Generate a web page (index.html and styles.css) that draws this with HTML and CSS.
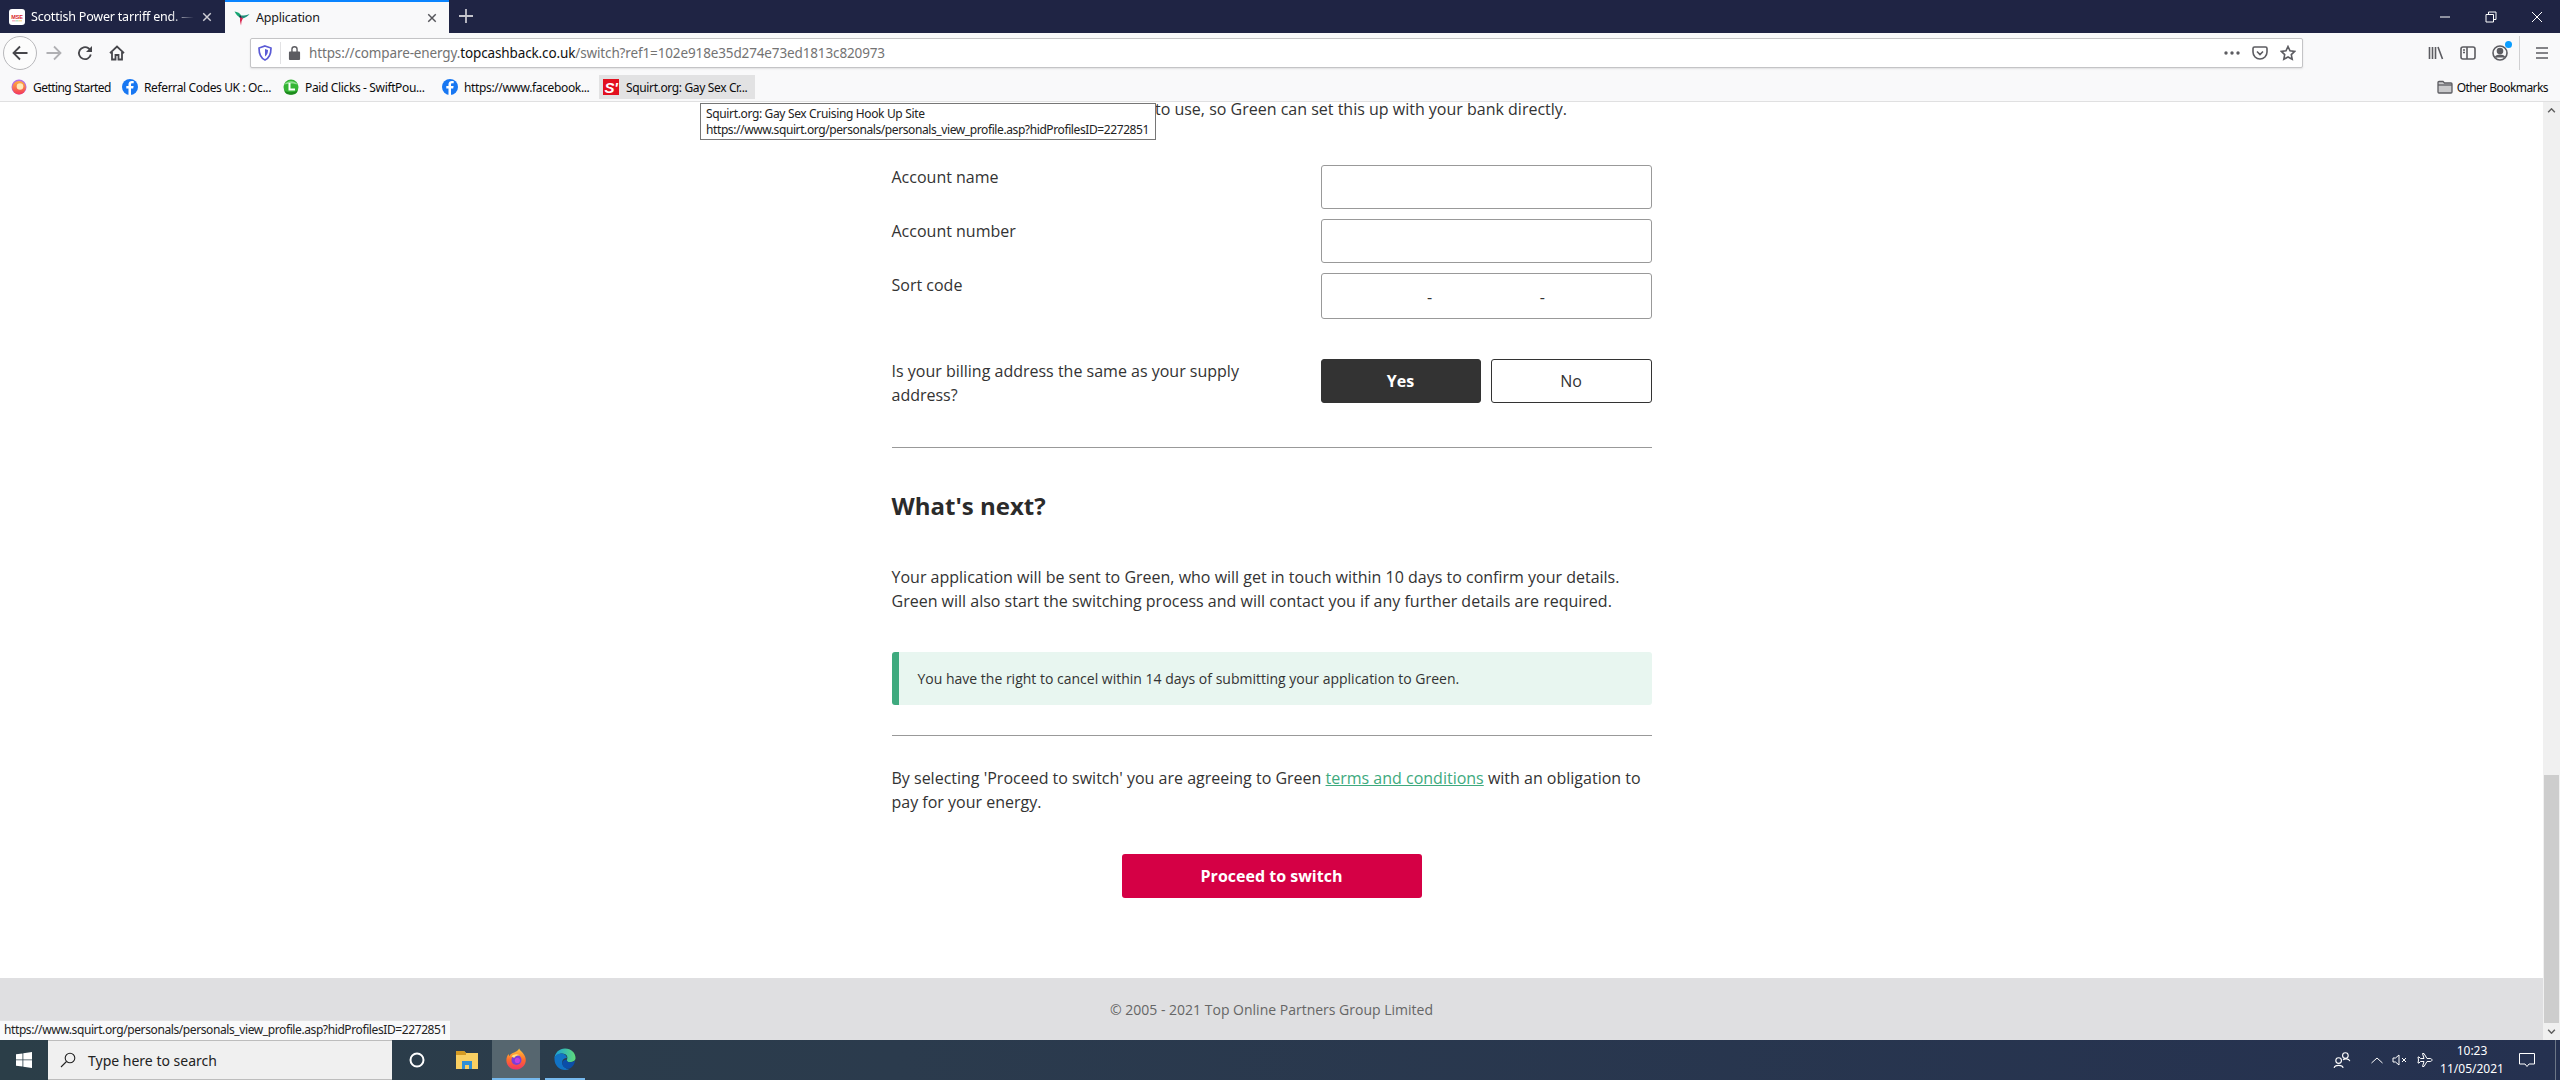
FILE: index.html
```html
<!DOCTYPE html>
<html lang="en">
<head>
<meta charset="utf-8">
<title>Application</title>
<link rel="stylesheet" href="styles.css">
</head>
<body>
<div class="app">
  <header class="tabbar">
    <div class="tab">
      <svg class="fav" viewBox="0 0 16 16"><rect width="16" height="16" rx="3" fill="#fff"/><text x="8" y="9.500" class="mse">MSE</text><rect x="3" y="11" width="3.500" height="1.500" fill="#f6b6c6"/><rect x="6.500" y="11" width="3" height="1.500" fill="#b9e3c6"/><rect x="9.500" y="11" width="3.500" height="1.500" fill="#f8d9a0"/></svg>
      <span class="tab-title fade">Scottish Power tarriff end. — MSE</span>
      <svg class="tab-x light" viewBox="0 0 12 12"><path d="M1.500 1.500l9 9M10.500 1.500l-9 9"/></svg>
    </div>
    <div class="tab active">
      <svg class="fav" viewBox="0 0 16 16"><path d="M.5 1.500c3 .2 5.500 1.700 6.800 4.200L6 7.500C3.800 6.500 2 4.200.5 1.500z" fill="#17a673"/><path d="M7 5.500c2.500.2 5.500-.3 8.500-1.500-1.500 2-4 3.500-7 4.500z" fill="#1d8f7a"/><path d="M6 7l3 1-1.500 3.500-.5 4L6 11z" fill="#d9264f"/><path d="M5.500 5.500l2 .5.300 2-2.300-.5z" fill="#1f2444"/></svg>
      <span class="tab-title">Application</span>
      <svg class="tab-x" viewBox="0 0 12 12"><path d="M1.500 1.500l9 9M10.500 1.500l-9 9"/></svg>
    </div>
    <svg class="newtab" viewBox="0 0 14 14"><path d="M7 0v14M0 7h14"/></svg>
    <div class="winctl">
      <svg viewBox="0 0 12 12"><path d="M1 6h10"/></svg>
      <svg viewBox="0 0 12 12"><path d="M1 3.500h7.500V11H1zM3.500 3.500V1H11v7.500H8.500"/></svg>
      <svg viewBox="0 0 12 12"><path d="M1 1l10 10M11 1L1 11"/></svg>
    </div>
  </header>

  <nav class="toolbar">
    <div class="back"><svg class="ic strong" viewBox="0 0 16 16"><path d="M15.500 8H1.500M8 1.500L1.500 8 8 14.500"/></svg></div>
    <svg class="ic fwd" viewBox="0 0 16 16"><path d="M.5 8h14M8 1.500L14.500 8 8 14.500"/></svg>
    <svg class="ic reload strong" viewBox="0 0 16 16"><path d="M13.800 9.500A6 6 0 1 1 11.500 3.300L13.500 5"/><path class="solid" d="M15 1v6H9z"/></svg>
    <svg class="ic home strong" viewBox="0 0 16 16"><path d="M1 8.200L8 1.500l7 6.700M3 7v7.500h3.500V10h3v4.500H13V7"/></svg>
    <div class="urlbar">
      <svg class="shield" viewBox="0 0 16 16"><path d="M8 1l6 2c0 6-1.500 10-6 12C3.500 13 2 9 2 3z" fill="#fff" stroke="#5b5bd6" stroke-width="1.700"/><path d="M8 4l3 1c0 3-.8 5-3 6.500z" fill="#5b5bd6"/></svg>
      <span class="urlsep"></span>
      <svg class="lock" viewBox="0 0 14 16"><path d="M2 7h10a1 1 0 0 1 1 1v7a1 1 0 0 1-1 1H2a1 1 0 0 1-1-1V8a1 1 0 0 1 1-1zM3.500 7V4.500a3.500 3.500 0 0 1 7 0V7H9V4.500a2 2 0 0 0-4 0V7z" fill="#5c5c61"/></svg>
      <span class="url">https://compare-energy.<b>topcashback.co.uk</b>/switch?ref1=102e918e35d274e73ed1813c820973</span>
      <span class="url-actions">
        <svg class="dots" viewBox="0 0 16 4"><circle cx="2" cy="2" r="1.700"/><circle cx="8" cy="2" r="1.700"/><circle cx="14" cy="2" r="1.700"/></svg>
        <svg class="ic pocket" viewBox="0 0 16 16"><path d="M2.500 2h11A1.500 1.500 0 0 1 15 3.500V7a7 7 0 0 1-14 0V3.500A1.500 1.500 0 0 1 2.500 2zM5 6.500l3 3 3-3"/></svg>
        <svg class="ic star" viewBox="0 0 16 16"><path d="M8 1.500l2 4.300 4.700.6-3.400 3.200.9 4.700L8 12l-4.200 2.300.9-4.700L1.300 6.400 6 5.800z"/></svg>
      </span>
    </div>
    <div class="tools">
      <svg class="ic" viewBox="0 0 16 16"><path d="M1.500 2v12M4.500 2v12M7.500 2v12M10 2l4.500 12"/></svg>
      <svg class="ic" viewBox="0 0 16 16"><rect x="1" y="2" width="14" height="12" rx="2"/><path d="M7 2v12M3 5h2M3 7.500h2"/></svg>
      <span class="account">
        <svg class="ic" viewBox="0 0 16 16"><circle cx="8" cy="8" r="7"/><circle cx="8" cy="6" r="2.500" fill="#5c5c61"/><path d="M3.500 12.500c1-3 8-3 9 0" fill="#5c5c61"/></svg>
        <i class="dot"></i>
      </span>
      <span class="toolsep"></span>
      <svg class="ic" viewBox="0 0 16 16"><path d="M2 3h12M2 8h12M2 13h12"/></svg>
    </div>
  </nav>

  <div class="bookmarks">
    <a class="bm"><svg class="fav" viewBox="0 0 16 16"><defs><linearGradient id="ffg" x1="0" y1="0" x2="0" y2="1"><stop offset="0" stop-color="#ffb13d"/><stop offset="1" stop-color="#f4365c"/></linearGradient></defs><circle cx="8" cy="8" r="7.500" fill="#b36ae2"/><circle cx="8" cy="8.700" r="6.800" fill="url(#ffg)"/><circle cx="9" cy="7.500" r="3.300" fill="#ffe9b8"/></svg><span class="tight">Getting Started</span></a>
    <a class="bm"><svg class="fav" viewBox="0 0 16 16"><circle cx="8" cy="8" r="8" fill="#1877f2"/><path d="M9 16V9.500h2.200l.4-2.500H9V5.600c0-.8.3-1.300 1.400-1.300h1.300V2.100C11.300 2 10.600 2 9.900 2 8 2 6.500 3.200 6.500 5.300V7H4.300v2.500h2.200V16z" fill="#fff"/></svg><span>Referral Codes UK : Oc...</span></a>
    <a class="bm"><svg class="fav" viewBox="0 0 16 16"><circle cx="8" cy="8" r="7.500" fill="#34b534"/><path d="M1 6c3-5 11-5 14 0-3-2-11-2-14 0z" fill="#8fe08f"/><path d="M6.500 4v6.500H12" fill="none" stroke="#fff" stroke-width="2"/><path d="M1 11c3 3 10 3 14 0-1 4-4 4.800-7 4.800S2 15 1 11z" fill="#1d8a1d"/></svg><span>Paid Clicks - SwiftPou...</span></a>
    <a class="bm"><svg class="fav" viewBox="0 0 16 16"><circle cx="8" cy="8" r="8" fill="#1877f2"/><path d="M9 16V9.500h2.200l.4-2.500H9V5.600c0-.8.3-1.300 1.400-1.300h1.300V2.100C11.300 2 10.600 2 9.900 2 8 2 6.500 3.200 6.500 5.300V7H4.300v2.500h2.200V16z" fill="#fff"/></svg><span>https://www.facebook...</span></a>
    <a class="bm hover"><svg class="fav" viewBox="0 0 16 16"><rect width="16" height="16" fill="#e2101f"/><text x="1.500" y="13.500" class="squirt">S'</text></svg><span>Squirt.org: Gay Sex Cr...</span></a>
    <a class="bm other"><svg class="ic folder" viewBox="0 0 16 14"><path d="M1 2.500a1 1 0 0 1 1-1h4L7.500 3H14a1 1 0 0 1 1 1v8a1 1 0 0 1-1 1H2a1 1 0 0 1-1-1z"/><path d="M1 5h14"/></svg><span class="tight">Other Bookmarks</span></a>
  </div>

  <div class="viewport">
    <main class="page">
      <div class="content">
        <p class="intro">Provide the bank account you wish to use, so Green can set this up with your bank directly.</p>
        <form class="fields">
          <label class="field-label">Account name</label><div class="input"></div>
          <label class="field-label">Account number</label><div class="input"></div>
          <label class="field-label">Sort code</label>
          <div class="input sort"><span></span><em>-</em><span></span><em>-</em><span></span></div>
        </form>
        <div class="billing">
          <p class="billing-q">Is your billing address the same as your supply address?</p>
          <div class="choice"><div class="opt on">Yes</div><div class="opt">No</div></div>
        </div>
        <hr class="rule first-rule">
        <h2 class="next">What's next?</h2>
        <p class="copy">Your application will be sent to Green, who will get in touch within 10 days to confirm your details. Green will also start the switching process and will contact you if any further details are required.</p>
        <div class="callout">You have the right to cancel within 14 days of submitting your application to Green.</div>
        <hr class="rule">
        <p class="copy terms">By selecting 'Proceed to switch' you are agreeing to Green <a class="link">terms and conditions</a> with an obligation to pay for your energy.</p>
        <div class="cta-wrap"><div class="cta">Proceed to switch</div></div>
      </div>
      <footer class="foot">© 2005 - 2021 Top Online Partners Group Limited</footer>
    </main>
    <aside class="scroll">
      <svg class="arrow" viewBox="0 0 10 6"><path d="M1 5l4-4 4 4"/></svg>
      <div class="track"><div class="thumb"></div></div>
      <svg class="arrow" viewBox="0 0 10 6"><path d="M1 1l4 4 4-4"/></svg>
    </aside>
    <div class="tooltip"><span class="tip-title">Squirt.org: Gay Sex Cruising Hook Up Site</span><br>https://www.squirt.org/personals/personals_view_profile.asp?hidProfilesID=2272851</div>
    <div class="status">https://www.squirt.org/personals/personals_view_profile.asp?hidProfilesID=2272851</div>
  </div>

  <footer class="taskbar">
    <div class="start"><svg viewBox="0 0 16 16"><path d="M0 2.300L6.500 1.400V7.500H0zM7.300 1.300L16 0V7.500H7.300zM0 8.300H6.500V14.600L0 13.700zM7.300 8.300H16V16L7.300 14.700z" fill="#fff"/></svg></div>
    <div class="search">
      <svg viewBox="0 0 16 16"><circle cx="10" cy="6" r="4.800"/><path d="M6.500 9.500L1 15"/></svg>
      <span>Type here to search</span>
    </div>
    <div class="tb-btn cortana-btn"><svg class="cortana" viewBox="0 0 16 16"><circle cx="8" cy="8" r="6.500"/></svg></div>
    <div class="tb-btn explorer-btn"><svg viewBox="0 0 22 22"><path d="M0 2h8l2 2h12v16H0z" fill="#f9cf62"/><path d="M0 2h8l2 2v2H0z" fill="#d49a23"/><path d="M6 12h10v8h-3v-4H9v4H6z" fill="#2f8fd6"/></svg></div>
    <div class="tb-btn fx-btn running active"><svg viewBox="0 0 24 24"><defs><linearGradient id="fxg" x1="0" y1="0" x2="0" y2="1"><stop offset="0" stop-color="#ffc93d"/><stop offset=".55" stop-color="#ff6a2b"/><stop offset="1" stop-color="#f0316a"/></linearGradient></defs><path d="M15.500 .5c.5 2 2.500 3 4 5 3 3.500 3.500 7 3 9.500-1 5-5.500 8.500-10.500 8.500C6 23.500 1.500 19 1.500 13.500c0-3 1-5.500 2.500-7l.5 2.500C6 6.500 8 5.500 10 5c2-1 4.500-2.500 5.500-4.500z" fill="url(#fxg)"/><circle cx="12.500" cy="13" r="5.500" fill="#7a3fd8"/><circle cx="13.500" cy="13.500" r="2.800" fill="#c23fe0"/><path d="M7 9c2-2 6-3 9-1-3 0-5 1-6 3z" fill="#ffe27a"/></svg></div>
    <div class="tb-btn edge-btn running"><svg viewBox="0 0 24 24"><defs><linearGradient id="edg" x1="0" y1="0" x2="1" y2="0"><stop offset="0" stop-color="#1a9fd8"/><stop offset="1" stop-color="#5fdc7a"/></linearGradient></defs><path d="M.5 12C.5 5 6 .5 12 .5c7 0 11.500 5 11.500 10.500 0 3-3 4.500-6 4.500-2 0-3.500-1-3.500-2.500 2-4-1-7-5-7-4 0-8.500 3-8.500 6z" fill="url(#edg)"/><path d="M.5 12c0-4 4-6 7.500-6 3 0 6 2 6 5-2 0-5 1-5 5s4 7 8 7c-1.500 .7-3.500 1-5 1C6 24 .5 19 .5 12z" fill="#1173c5"/><path d="M14 13c0 2 1.500 2.500 3.500 2.500 2.500 0 4.500-.5 5.500-1.500-1 5-4 8.500-7 8.500-4 0-7-3-7-6s3-4.500 5.500-3.500z" fill="#0b4ea8"/></svg></div>
    <div class="tray">
      <svg class="t-people" viewBox="0 0 16 16"><circle cx="5" cy="8.500" r="2.500"/><path d="M1 15c.5-3 7.500-3 8 0"/><circle cx="11" cy="4" r="2.500"/><path d="M9 8c1-1.500 5-1.500 6 1"/></svg>
      <svg class="t-chev" viewBox="0 0 12 7"><path d="M.5 6L6 1l5.500 5"/></svg>
      <svg class="t-vol" viewBox="0 0 16 12"><path d="M1 4h2.500L7 1v10L3.500 8H1zM10 4l4 4M14 4l-4 4"/></svg>
      <svg class="t-plane" viewBox="0 0 16 16"><path d="M15 8c0-1-1-1.500-2-1.500H10L7 1.500H5.500L7 6.500H3.500L2 5H1l.5 3L1 11h1l1.500-1.500H7L5.500 14.500H7l3-5h3c1 0 2-.5 2-1.500z"/></svg>
      <div class="clock"><span>10:23</span><span>11/05/2021</span></div>
      <svg class="t-note" viewBox="0 0 16 15"><path d="M.5 .5h15V11H10l-2 2.500L6 11H.5z"/></svg>
      <i class="t-peek"></i>
    </div>
  </footer>
</div>
</body>
</html>
```
FILE: styles.css
```css
* { box-sizing: border-box; }
html, body { margin: 0; height: 100%; overflow: hidden; }
body { font-family: "Noto Sans", "Open Sans", sans-serif; color: #333; background: #fff; }
svg { display: block; flex: none; }
p, h2 { margin: 0; }

.app { display: flex; flex-direction: column; width: 2560px; height: 1080px; }

/* title and tab strip */
.tabbar { display: flex; align-items: stretch; height: 33px; background: #1f2444; flex: none; }
.tab { width: 225px; display: flex; align-items: center; padding-left: 9px; color: #fff; font-size: 12.500px; letter-spacing: -.2px; }
.tab.active { width: 224px; background: #f9f9fa; color: #18181a; border-top: 2px solid #0a84ff; }
.fav { width: 16px; height: 16px; }
.mse { font-family: "Liberation Sans", sans-serif; font-size: 5.500px; font-weight: 700; fill: #d8232a; text-anchor: middle; }
.squirt { font-family: "Liberation Sans", sans-serif; font-size: 15px; font-weight: 700; font-style: italic; fill: #fff; }
.tab-title { flex: 1; margin-left: 6px; white-space: nowrap; overflow: hidden; min-width: 0; }
.fade { -webkit-mask-image: linear-gradient(to right, #000 85%, transparent); mask-image: linear-gradient(to right, #000 85%, transparent); }
.tab-x { width: 10px; height: 10px; margin: 0 12px 0 8px; fill: none; stroke: #55555a; stroke-width: 1.700; }
.tab-x.light { stroke: #cfcfd6; margin-right: 13px; }
.newtab { width: 14px; height: 14px; margin: 9px 0 0 10px; fill: none; stroke: #c4c4cc; stroke-width: 1.800; }
.winctl { margin-left: auto; display: flex; align-items: center; gap: 34px; padding-right: 17px; }
.winctl svg { width: 12px; height: 12px; fill: none; stroke: #fff; stroke-width: 1; }

/* navigation toolbar */
.toolbar { display: flex; align-items: center; height: 39px; background: #f9f9fa; flex: none; padding-left: 3px; }
.ic { width: 16px; height: 16px; fill: none; stroke: #5c5c61; stroke-width: 1.600; }
.strong { stroke: #46464b; stroke-width: 1.800; }
.back { width: 34px; height: 34px; border: 1px solid #b8b8bb; border-radius: 50%; display: flex; align-items: center; justify-content: center; background: #fcfcfc; }
.fwd { margin-left: 9px; stroke: #b0b0b3; stroke-width: 1.800; }
.reload { margin-left: 15px; }
.reload .solid { fill: #46464b; stroke: none; }
.home { margin-left: 16px; }
.urlbar { display: flex; align-items: center; margin-left: 125px; width: 2053px; height: 30px; background: #fff; border: 1px solid #c4c4c6; border-radius: 2px; box-shadow: 0 1px 2px rgba(0,0,0,.1); padding-left: 6px; }
.shield { width: 16px; height: 16px; }
.urlsep { width: 1px; height: 22px; margin: 0 7px 0 7px; background: #e2e2e4; }
.lock { width: 13px; height: 15px; }
.url { margin-left: 8px; padding-top: 1px; font-size: 13.500px; letter-spacing: -.13px; color: #737373; white-space: nowrap; }
.url b { font-weight: 400; color: #111; }
.url-actions { margin-left: auto; display: flex; align-items: center; padding-right: 6px; }
.dots { width: 16px; height: 4px; fill: #5c5c61; }
.pocket { margin-left: 12px; }
.star { margin-left: 12px; }
.tools { display: flex; align-items: center; margin-left: 125px; }
.tools > .ic:nth-child(2) { margin-left: 16px; }
.account { position: relative; margin-left: 16px; }
.dot { position: absolute; right: -4px; top: -4px; width: 7px; height: 7px; border-radius: 50%; background: #0a9dff; }
.toolsep { width: 1px; height: 34px; margin: 0 14px 0 11px; background: #d0d0d2; }

/* bookmarks */
.bookmarks { display: flex; align-items: center; height: 30px; flex: none; background: #f9f9fa; border-bottom: 1px solid #e0e0e1; padding-left: 8px; font-size: 12px; letter-spacing: -.36px; color: #0c0c0d; }
.bm { display: flex; align-items: center; gap: 6px; height: 24px; padding: 0 3px; white-space: nowrap; flex: none; }
.bm span { padding-top: 2px; }
.bm .tight { letter-spacing: -.56px; }
.bm:nth-child(1) { width: 111px; }
.bm:nth-child(2) { width: 161px; }
.bm:nth-child(3) { width: 159px; }
.bm:nth-child(4) { width: 160px; }
.bm.hover { width: 156px; background: #e2e2e3; padding: 0 4px; gap: 7px; }
.bm.other { margin: 0 9px 0 auto; gap: 4px; }
.folder { height: 14px; fill: #c9c9cb; stroke-width: 1.300; }

/* page */
.viewport { position: relative; flex: 1; display: flex; min-height: 0; overflow: hidden; }
.page { flex: 1; display: flex; flex-direction: column; min-width: 0; font-family: "Open Sans", sans-serif; font-size: 16px; line-height: 24px; }
.content { flex: 1; width: 760px; margin: 0 auto; }
.intro { margin-top: -5px; white-space: nowrap; }
.fields { display: grid; grid-template-columns: 429px 331px; row-gap: 10px; margin-top: 44px; }
.field-label { display: block; }
.input { height: 44px; border: 1px solid #999; border-radius: 3px; background: #fff; }
.sort { height: 46px; display: flex; align-items: center; padding-top: 1px; }
.sort span { flex: 1; }
.sort em { font-style: normal; font-size: 16px; }
.sort em:first-of-type { margin-right: 2px; }
.billing { display: grid; grid-template-columns: 429px 331px; margin-top: 40px; }
.billing-q { width: 390px; }
.choice { display: grid; grid-template-columns: 160px 161px; column-gap: 10px; height: 44px; }
.opt { display: flex; align-items: center; justify-content: center; border: 1px solid #333; border-radius: 3px; background: #fff; }
.opt.on { background: #333; color: #fff; font-weight: 700; }
.rule { border: 0; height: 1px; margin: 30px 0 0; background: #999; }
.first-rule { margin-top: 40px; }
.next { margin-top: 40px; font-size: 24px; line-height: 36px; font-weight: 700; color: #2b2b2b; }
.copy { margin-top: 41px; }
.callout { margin-top: 39px; height: 53px; display: flex; align-items: center; padding-left: 19px; border-left: 7px solid #3eaa7e; border-radius: 3px; background: #e8f6f0; font-size: 14px; }
.terms { margin-top: 30px; }
.link { color: #3eaa7e; text-decoration: underline; }
.cta-wrap { display: flex; justify-content: center; margin-top: 40px; }
.cta { width: 300px; height: 44px; display: flex; align-items: center; justify-content: center; background: #d50045; border-radius: 3px; color: #fff; font-weight: 700; }
.foot { height: 62px; flex: none; display: flex; align-items: center; justify-content: center; padding-top: 1px; background: #dfdfe1; color: #666; font-size: 14px; }

/* scrollbar */
.scroll { width: 17px; flex: none; display: flex; flex-direction: column; background: #f0f0f0; }
.arrow { width: 17px; height: 17px; padding: 6px 4px; fill: none; stroke: #606060; stroke-width: 1.800; }
.track { flex: 1; display: flex; flex-direction: column; justify-content: flex-end; }
.thumb { height: 248px; margin: 0 1px; background: #cdcdcd; }

/* overlays */
.tooltip { position: absolute; left: 700px; top: 1px; width: 456px; height: 37px; padding: 2px 5px; background: #fff; border: 1px solid #767676; font-size: 12px; letter-spacing: -.4px; line-height: 16px; color: #222; white-space: nowrap; overflow: hidden; }
.tip-title { letter-spacing: -.35px; }
.status { position: absolute; left: 0; bottom: 0; width: 450px; height: 20px; padding-left: 4px; background: #f9f9fa; border-top: 1px solid #e4e4e5; font-size: 12px; letter-spacing: -.4px; line-height: 18px; color: #222; white-space: nowrap; overflow: hidden; }

/* taskbar */
.taskbar { display: flex; height: 40px; flex: none; background: linear-gradient(to right, #2b3e48 0%, #2b3b4d 35%, #253150 100%); }
.start { width: 48px; display: flex; align-items: center; justify-content: center; }
.start svg { width: 16px; height: 16px; }
.search { width: 344px; display: flex; align-items: center; background: #f0f0f0; border-top: 1px solid #bdbdbd; border-bottom: 1px solid #bdbdbd; padding-left: 12px; font-size: 14px; color: #222; }
.search svg { width: 16px; height: 16px; fill: none; stroke: #222; stroke-width: 1.100; }
.search span { margin-left: 12px; }
.tb-btn { width: 48px; display: flex; align-items: center; justify-content: center; }
.tb-btn svg { width: 22px; height: 22px; }
.cortana-btn { width: 50px; }
.explorer-btn { width: 50px; }
.edge-btn { width: 40px; margin-left: 5px; }
.cortana { width: 16px !important; height: 16px !important; fill: none; stroke: #fff; stroke-width: 2; }
.running { border-bottom: 2px solid #76b9ed; }
.active { background: #56666f; }
.tray { margin-left: auto; display: flex; align-items: center; color: #fff; position: relative; height: 100%; }
.tray svg { fill: none; stroke: #fff; stroke-width: 1; }
.t-people { width: 18px; height: 18px; }
.t-chev { width: 12px; height: 7px; margin-left: 20px; }
.t-vol { width: 16px; height: 12px; margin-left: 9px; }
.t-plane { width: 16px; height: 16px; margin-left: 9px; }
.clock { width: 72px; margin-left: 3px; display: flex; flex-direction: column; align-items: center; font-size: 12px; line-height: 18px; }
.t-note { width: 16px; height: 15px; margin: 0 25px 0 11px; }
.t-peek { position: absolute; right: 4px; top: 0; bottom: 0; width: 1px; background: #6c7686; }
```
